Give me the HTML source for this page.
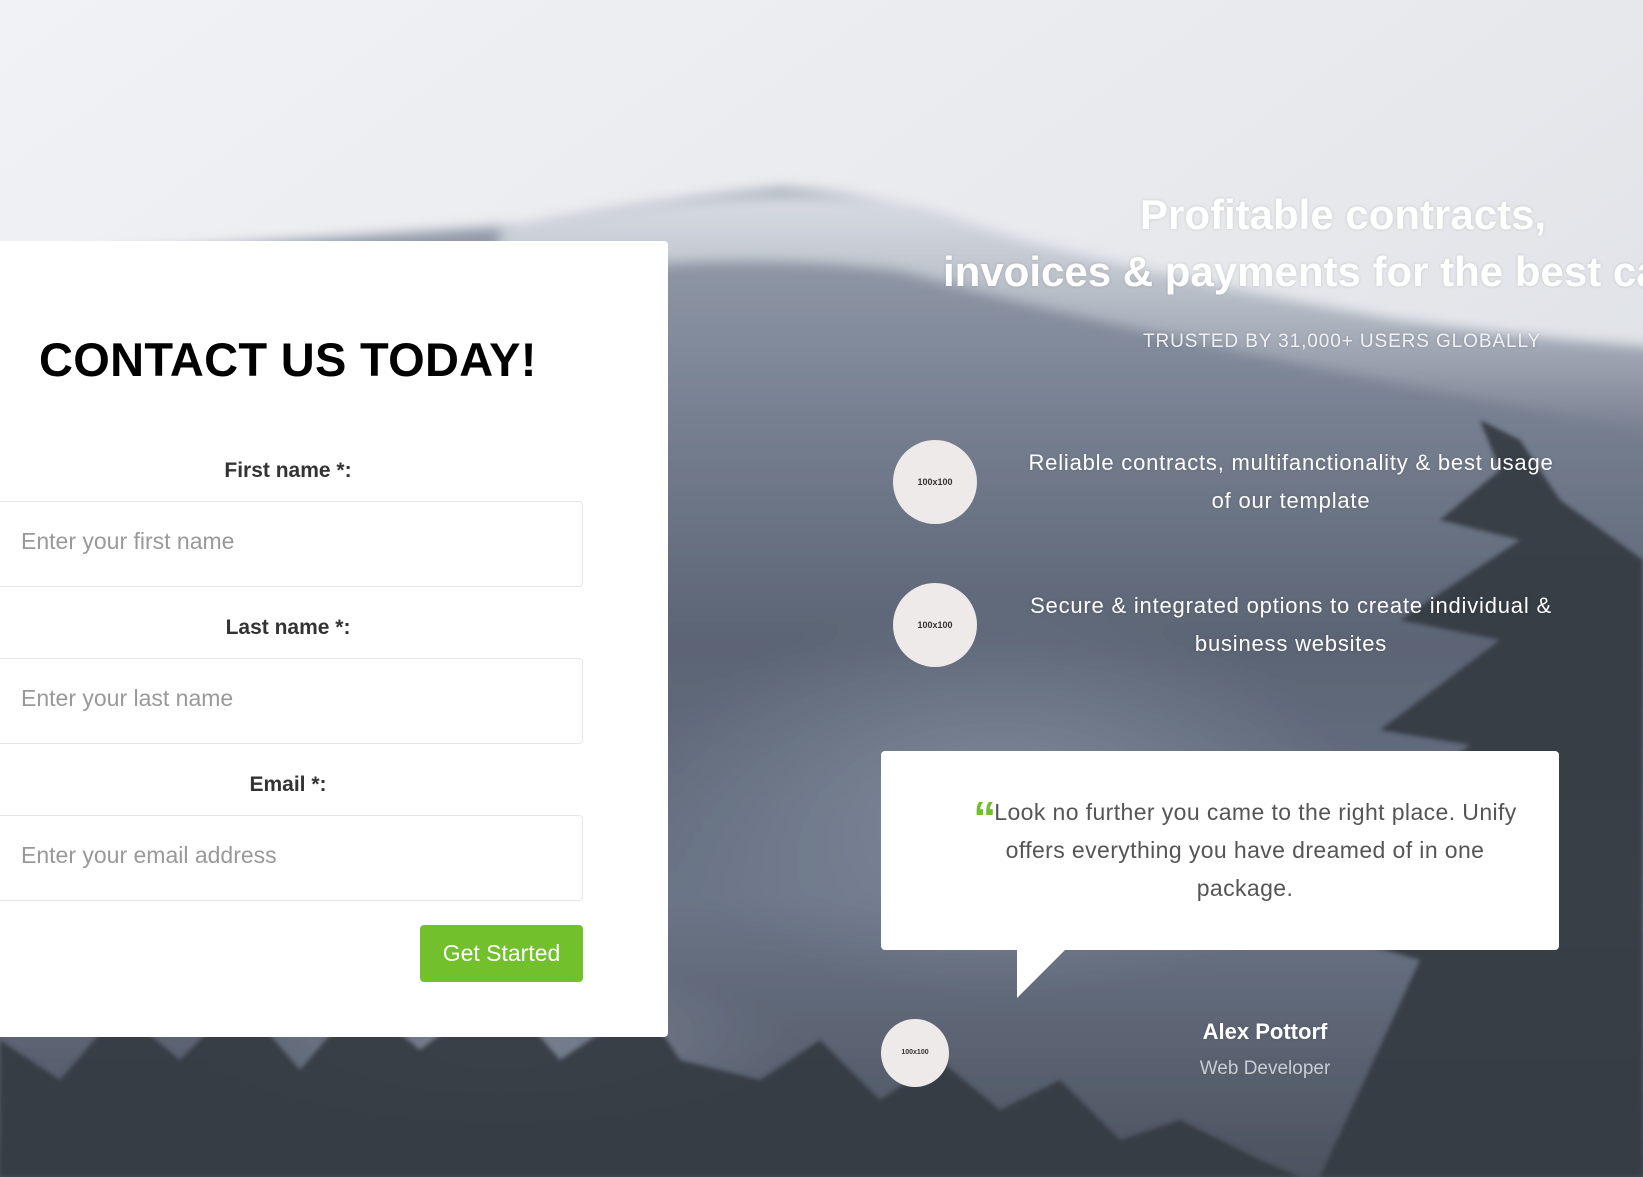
<!DOCTYPE html>
<html><head><meta charset="utf-8"><style>
*{margin:0;padding:0;box-sizing:border-box}
html,body{width:1643px;height:1177px;overflow:hidden}
body{position:relative;font-family:"Liberation Sans",Arial,sans-serif;background:#eef0f3}
#bg{position:absolute;left:0;top:0}
#wrap{position:absolute;left:0;top:0;width:1643px;height:1177px;overflow:hidden}
.abs{position:absolute}
.card{left:0;top:241px;width:668px;height:796px;background:#fff;border-radius:0 4px 4px 0}
h1{position:absolute;left:39px;top:332px;font-size:47px;font-weight:bold;color:#000;letter-spacing:.3px;white-space:nowrap}
.lbl{position:absolute;left:0;width:576px;text-align:center;font-size:21px;font-weight:bold;color:#333}
.inp{position:absolute;left:-5px;width:588px;height:86px;border:1px solid #e6e6e6;border-radius:4px;background:#fff;font-size:23px;color:#999;padding:26px 0 0 25px}
.btn{left:420px;top:925px;width:163px;height:57px;background:#72c02c;border-radius:4px;color:#fff;font-size:23px;text-align:center;line-height:57px}
.w{color:#fff;white-space:nowrap;text-shadow:0 0 3px rgba(0,0,0,.15)}
.h2{font-size:42px;font-weight:bold;line-height:48px}
.circ{background:#efeaea;border-radius:50%;color:#333;font-size:9px;font-weight:bold;text-align:center}
.feat{font-size:22px;text-align:center;line-height:38px;width:640px;letter-spacing:.8px}
.box{left:881px;top:751px;width:678px;height:199px;background:#fff;border-radius:4px}
.q{font-size:23px;color:#555;text-align:center;line-height:38px;width:570px;left:960px;top:793px;letter-spacing:.4px}
</style></head><body>
<div id="wrap">
<svg id="bg" width="1643" height="1177" viewBox="0 0 1643 1177">
<defs>
<linearGradient id="sky" x1="0" y1="0" x2="1" y2="1">
<stop offset="0" stop-color="#f1f2f5"/><stop offset=".5" stop-color="#e6e8ec"/><stop offset="1" stop-color="#d3d7de"/></linearGradient>
<linearGradient id="mt" x1="0" y1="0" x2="0" y2="1">
<stop offset="0" stop-color="#9aa2b0"/><stop offset=".2" stop-color="#7a8394"/><stop offset=".45" stop-color="#5b6474"/><stop offset=".7" stop-color="#6b7587"/><stop offset="1" stop-color="#4a505c"/></linearGradient>
<radialGradient id="fog" cx=".5" cy=".5" r=".5"><stop offset="0" stop-color="#8f99aa" stop-opacity=".6"/><stop offset="1" stop-color="#8f99aa" stop-opacity="0"/></radialGradient>
<linearGradient id="fade" x1="0" y1="0" x2="0" y2="1"><stop offset="0" stop-color="#e3e6eb" stop-opacity=".85"/><stop offset="1" stop-color="#e3e6eb" stop-opacity="0"/></linearGradient>
<filter id="bl"><feGaussianBlur stdDeviation="6"/></filter>
<filter id="bl2"><feGaussianBlur stdDeviation="2"/></filter>
</defs>
<rect width="1643" height="1177" fill="url(#sky)"/>
<g filter="url(#bl)">
<path d="M0 260 Q300 240 520 225 Q650 200 780 188 Q900 195 1020 240 Q1200 285 1400 320 Q1550 340 1700 350 L1700 1200 L-20 1200Z" fill="url(#mt)"/>
<path d="M500 230 Q760 180 900 205 Q1150 270 1700 350 L1700 440 Q1150 340 900 270 Q700 245 500 285Z" fill="url(#fade)"/>
<ellipse cx="1000" cy="800" rx="350" ry="200" fill="url(#fog)"/>
<ellipse cx="500" cy="1050" rx="300" ry="90" fill="url(#fog)"/>
</g>
<g fill="#363a42" opacity=".92" filter="url(#bl2)">
<path d="M1480 420 L1500 470 L1440 520 L1520 540 L1400 620 L1500 640 L1380 730 L1470 745 L1360 830 L1450 850 L1350 940 L1420 960 L1320 1177 L1643 1177 L1643 560 L1560 500 L1520 440Z"/>
<path d="M0 1040 L60 1080 L120 1010 L180 1060 L240 1000 L300 1070 L360 1000 L420 1050 L500 990 L560 1060 L620 1020 L680 1060 L760 1080 L820 1040 L880 1100 L940 1060 L1000 1110 L1060 1080 L1120 1140 L1180 1120 L1260 1160 L1300 1177 L0 1177Z"/>
<path d="M640 1000 L680 1060 L720 1177 L560 1177Z"/>
<path d="M820 1060 L860 1177 L780 1177Z"/>
</g>
</svg>

<div class="abs card"></div>
<h1>CONTACT US TODAY!</h1>
<div class="lbl" style="top:459px">First name *:</div>
<div class="inp" style="top:501px">Enter your first name</div>
<div class="lbl" style="top:616px">Last name *:</div>
<div class="inp" style="top:658px">Enter your last name</div>
<div class="lbl" style="top:773px">Email *:</div>
<div class="inp" style="top:815px">Enter your email address</div>
<div class="abs btn">Get Started</div>

<div class="abs w h2" style="left:1140px;top:191px">Profitable contracts,</div>
<div class="abs w h2" style="left:943px;top:248px">invoices &amp; payments for the best candidates</div>
<div class="abs w" style="left:1143px;top:331px;font-size:19px;color:#eef0f3;letter-spacing:.9px">TRUSTED BY 31,000+ USERS GLOBALLY</div>

<div class="abs circ" style="left:893px;top:440px;width:84px;height:84px;line-height:84px">100x100</div>
<div class="abs w feat" style="left:971px;top:444px">Reliable contracts, multifanctionality &amp; best usage<br>of our template</div>
<div class="abs circ" style="left:893px;top:583px;width:84px;height:84px;line-height:84px">100x100</div>
<div class="abs w feat" style="left:971px;top:587px">Secure &amp; integrated options to create individual &amp;<br>business websites</div>

<div class="abs box"></div>
<svg class="abs" style="left:1017px;top:949px" width="50" height="50"><path d="M0 0 L49 0 L0 49Z" fill="#fff"/></svg>
<div class="abs q"><span style="color:#72c02c;font-weight:bold;font-size:46px;line-height:20px;vertical-align:-14px;letter-spacing:-2px">&#8220;</span>Look no further you came to the right place. Unify offers everything you have dreamed of in one package.</div>

<div class="abs circ" style="left:881px;top:1019px;width:68px;height:68px;line-height:68px;font-size:7px">100x100</div>
<div class="abs w" style="left:1165px;top:1019px;width:200px;text-align:center;font-size:22px;font-weight:bold">Alex Pottorf</div>
<div class="abs" style="left:1165px;top:1058px;width:200px;text-align:center;font-size:19px;color:#c9ccd2">Web Developer</div>
</div>
</body></html>
